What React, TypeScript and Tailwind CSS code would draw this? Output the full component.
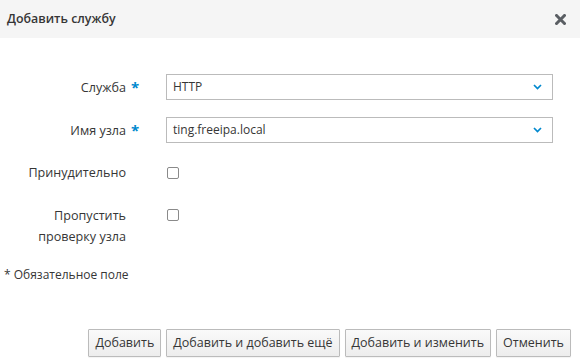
import React from "react";

const font = { fontFamily: '"Open Sans", "Noto Sans", sans-serif' };

function Chevron() {
  return (
    <svg width="9" height="6" viewBox="0 0 9 6" className="block">
      <polyline points="1,1 4.5,4.5 8,1" fill="none" stroke="#0088ce" strokeWidth="1.7" />
    </svg>
  );
}

function Select({ value }: { value: string }) {
  return (
    <div className="flex h-[26px] w-[387px] items-center justify-between border border-[#bbbbbb] bg-white pl-[6px] pr-[10px] text-[12px] text-[#363636]">
      <span>{value}</span>
      <Chevron />
    </div>
  );
}

function Checkbox() {
  return <div className="h-[12px] w-[12px] rounded-[2px] border border-[#8a8a8a] bg-white" />;
}

function Label({ children, star }: { children: React.ReactNode; star?: boolean }) {
  return (
    <>
      <div className="w-[126px] shrink-0 text-right text-[12.6px] leading-[21px] text-[#363636]">{children}</div>
      <div className="w-[40px] shrink-0 pl-[5px] text-[15px] font-bold leading-[21px] text-[#0088ce]">{star ? "*" : ""}</div>
    </>
  );
}

function Button({ children }: { children: React.ReactNode }) {
  return (
    <div className="flex h-[28px] items-center rounded-[1px] border border-[#bbbbbb] bg-gradient-to-b from-[#fafafa] to-[#ededed] px-[6px] text-[12.5px] text-[#363636] shadow-[0_1px_1px_rgba(0,0,0,0.05)]">
      {children}
    </div>
  );
}

export default function App() {
  return (
    <div className="h-[364px] w-[580px] overflow-hidden bg-white" style={font}>
      <div className="flex h-[38px] items-center justify-between bg-[#f5f5f5] pl-[7px] pr-[14px]">
        <div className="text-[12.4px] font-semibold text-[#363636]">Добавить службу</div>
        <svg width="11" height="11" viewBox="0 0 11 11" className="mt-[1px]">
          <path d="M1.5 1.5 L9.5 9.5 M9.5 1.5 L1.5 9.5" stroke="#5a5e63" strokeWidth="3" strokeLinecap="square" />
        </svg>
      </div>
      <div className="flex flex-col pt-[36px]">
        <div className="flex h-[26px] items-center">
          <Label star>Служба</Label>
          <Select value="HTTP" />
        </div>
        <div className="mt-[17px] flex h-[26px] items-center">
          <Label star>Имя узла</Label>
          <Select value="ting.freeipa.local" />
        </div>
        <div className="mt-[19px] flex items-start">
          <Label>Принудительно</Label>
          <div className="pl-[1px] pt-[5px]">
            <Checkbox />
          </div>
        </div>
        <div className="mt-[22px] flex items-start">
          <Label>
            Пропустить
            <br />
            проверку узла
          </Label>
          <div className="pl-[1px] pt-[4px]">
            <Checkbox />
          </div>
        </div>
        <div className="mt-[19px] pl-[4px] text-[12px] leading-[18px] text-[#363636]">* Обязательное поле</div>
        <div className="mt-[45px] flex justify-end gap-[5px] pr-[9px]">
          <Button>Добавить</Button>
          <Button>Добавить и добавить ещё</Button>
          <Button>Добавить и изменить</Button>
          <Button>Отменить</Button>
        </div>
      </div>
    </div>
  );
}
